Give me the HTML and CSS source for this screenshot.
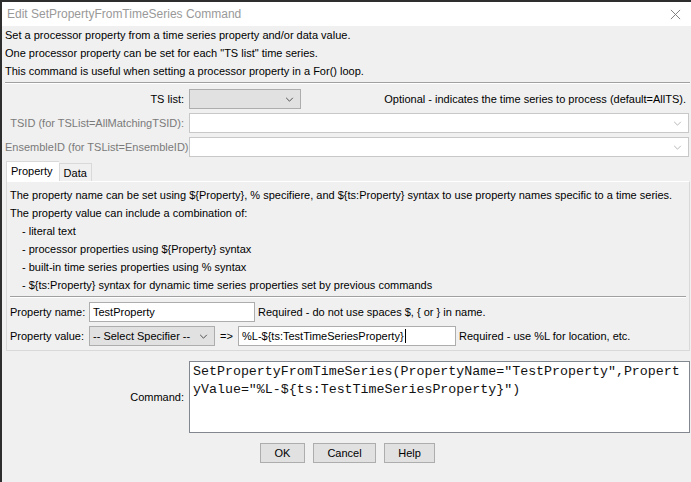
FILE: index.html
```html
<!DOCTYPE html>
<html lang="en">
<head>
  <meta charset="UTF-8">
  <title>Edit SetPropertyFromTimeSeries Command</title>
  <link rel="stylesheet" href="styles.css">
</head>
<body>
  <div class="window">
    <div class="titlebar">
      <span class="title">Edit SetPropertyFromTimeSeries Command</span>
      <svg class="close" viewBox="0 0 12 12"><path d="M1 1L11 11M11 1L1 11" stroke="#777" stroke-width="1" fill="none"/></svg>
    </div>
    <div class="content">
      <div class="intro">
        <div>Set a processor property from a time series property and/or data value.</div>
        <div>One processor property can be set for each "TS list" time series.</div>
        <div>This command is useful when setting a processor property in a For() loop.</div>
      </div>
      <div class="sep"></div>

      <div class="form">
        <div class="row">
          <span class="label">TS list:</span>
          <div class="combo combo-ts">
            <svg class="arrow" viewBox="0 0 10 6"><path d="M1 1L5 5L9 1" stroke="#333" fill="none"/></svg>
          </div>
          <span class="note note-ts">Optional - indicates the time series to process (default=AllTS).</span>
        </div>
        <div class="row">
          <span class="label disabled">TSID (for TSList=AllMatchingTSID):</span>
          <div class="combo combo-wide">
            <svg class="arrow" viewBox="0 0 10 6"><path d="M1 1L5 5L9 1" stroke="#aaa" fill="none"/></svg>
          </div>
        </div>
        <div class="row">
          <span class="label disabled">EnsembleID (for TSList=EnsembleID):</span>
          <div class="combo combo-wide">
            <svg class="arrow" viewBox="0 0 10 6"><path d="M1 1L5 5L9 1" stroke="#aaa" fill="none"/></svg>
          </div>
        </div>
      </div>

      <div class="tabs">
        <span class="tab active">Property</span>
        <span class="tab">Data</span>
      </div>
      <div class="panel">
        <div class="help">
          <div>The property name can be set using ${Property}, % specifiere, and ${ts:Property} syntax to use property names specific to a time series.</div>
          <div>The property value can include a combination of:</div>
          <div class="indent">- literal text</div>
          <div class="indent">- processor properties using ${Property} syntax</div>
          <div class="indent">- built-in time series properties using % syntax</div>
          <div class="indent">- ${ts:Property} syntax for dynamic time series properties set by previous commands</div>
        </div>
        <div class="sep sep-panel"></div>
        <div class="prow">
          <span class="plabel">Property name:</span>
          <div class="field field-name">TestProperty</div>
          <span class="note">Required - do not use spaces $, { or } in name.</span>
        </div>
        <div class="prow">
          <span class="plabel">Property value:</span>
          <div class="combo combo-spec">
            <span>-- Select Specifier --</span>
            <svg class="arrow" viewBox="0 0 10 6"><path d="M1 1L5 5L9 1" stroke="#333" fill="none"/></svg>
          </div>
          <span class="arrow-text">=&gt;</span>
          <div class="field field-value">%L-${ts:TestTimeSeriesProperty}<span class="caret"></span></div>
          <span class="note">Required - use %L for location, etc.</span>
        </div>
      </div>

      <div class="command-row">
        <span class="label">Command:</span>
        <div class="command">SetPropertyFromTimeSeries(PropertyName="TestProperty",PropertyValue="%L-${ts:TestTimeSeriesProperty}")</div>
      </div>

      <div class="buttons">
        <button class="btn btn-ok">OK</button>
        <button class="btn btn-cancel">Cancel</button>
        <button class="btn btn-help">Help</button>
      </div>
    </div>
  </div>
</body>
</html>
```

FILE: styles.css
```css
body {
  margin: 0;
  background: #2e2e2e;
  font-family: 'Liberation Sans', Arial, sans-serif;
  font-size: 11px;
  color: #000;
  overflow: hidden;
}
.window {
  margin: 2px 0 0 2px;
  width: 689px;
  height: 480px;
  background: #f0f0f0;
  white-space: nowrap;
}
.titlebar {
  height: 24px;
  background: #fff;
  display: flex;
  align-items: center;
  justify-content: space-between;
  padding: 0 10px 0 5px;
}
.title {
  font-size: 12px;
  color: #999;
}
.close {
  width: 11px;
  height: 11px;
}
.content {
  padding: 0 1px 0 3px;
}
.intro {
  line-height: 18px;
}
.sep {
  margin-top: 2px;
  border-top: 1px solid #a0a0a0;
  border-bottom: 1px solid #fff;
}
.form {
  display: flex;
  flex-direction: column;
  gap: 4px;
  margin-top: 5px;
}
.row {
  display: flex;
  align-items: center;
  height: 20px;
}
.label {
  width: 179px;
  flex: none;
  text-align: right;
  margin-right: 5px;
}
.label.disabled {
  color: #7a7a7a;
}
.combo {
  position: relative;
  height: 20px;
  box-sizing: border-box;
  border: 1px solid #adadad;
  background: #fff;
  display: flex;
  align-items: center;
}
.combo .arrow {
  position: absolute;
  right: 6px;
  top: 7px;
  width: 9px;
  height: 5px;
}
.combo-ts {
  width: 112px;
  background: #e1e1e1;
}
.combo-wide {
  width: 500px;
  border-color: #c8c8c8;
}
.note {
  margin-left: auto;
  padding-right: 4px;
}
.tabs {
  display: flex;
  align-items: flex-end;
  height: 20px;
  margin-top: 4px;
  padding-left: 1px;
}
.tab {
  height: 18px;
  line-height: 18px;
  padding: 0 4px;
  border: 1px solid #d9d9d9;
  border-bottom: none;
  box-sizing: border-box;
  background: #f0f0f0;
}
.tab.active {
  height: 21px;
  line-height: 19px;
  padding: 0 6px 0 4px;
  background: #fff;
  border-right: none;
  margin-bottom: -1px;
  position: relative;
}
.panel {
  margin-left: 1px;
  border: 1px solid #d9d9d9;
  border-top-color: #fff;
  padding: 4px 3px 4px 3px;
  height: 170px;
  box-sizing: border-box;
}
.help {
  line-height: 18px;
}
.indent {
  padding-left: 12px;
}
.sep-panel {
  margin: 2px 0 4px 0;
}
.prow {
  display: flex;
  align-items: center;
  height: 20px;
  margin-bottom: 4px;
}
.plabel {
  width: 79px;
  flex: none;
}
.field {
  height: 20px;
  box-sizing: border-box;
  border: 1px solid #adadad;
  background: #fff;
  padding: 0 3px;
  line-height: 18px;
  overflow: hidden;
}
.field-name {
  width: 166px;
}
.combo-spec {
  width: 126px;
  background: #e1e1e1;
  padding-left: 3px;
}
.arrow-text {
  width: 23px;
  text-align: center;
}
.field-value {
  width: 218px;
  display: flex;
  align-items: center;
}
.caret {
  display: inline-block;
  width: 1px;
  height: 14px;
  background: #000;
  margin-left: 1px;
}
.prow .note {
  margin-left: 3px;
}
.command-row {
  display: flex;
  align-items: center;
  margin-top: 10px;
}
.command {
  width: 501px;
  height: 72px;
  box-sizing: border-box;
  border: 1px solid #828790;
  background: #fff;
  padding: 1px 3px 0 3px;
  font-family: 'Liberation Mono', 'Courier New', monospace;
  font-size: 13.3px;
  line-height: 18px;
  color: #111;
  white-space: normal;
  word-break: break-all;
}
.buttons {
  display: flex;
  justify-content: center;
  gap: 8px;
  margin-top: 10px;
}
.btn {
  height: 20px;
  border: 1px solid #adadad;
  background: #e1e1e1;
  font-family: 'Liberation Sans', Arial, sans-serif;
  font-size: 11px;
  padding: 0;
  color: #000;
}
.btn-ok { width: 45px; }
.btn-cancel { width: 63px; }
.btn-help { width: 51px; }
```
